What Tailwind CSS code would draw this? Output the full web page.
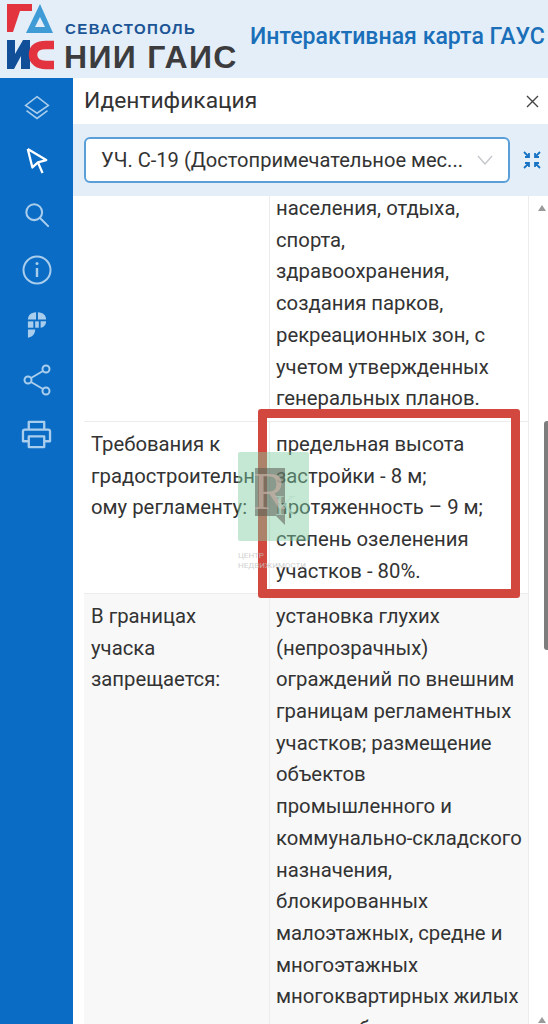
<!DOCTYPE html>
<html lang="en">

<head>
    <meta charset="UTF-8">
    <meta name="viewport" content="width=device-width, initial-scale=1.0">
    <script src="https://cdn.jsdelivr.net/npm/@tailwindcss/browser@4"></script>
    <title>Интерактивная карта ГАУС</title>
</head>

<body class="relative w-[548px] h-[1024px] overflow-hidden bg-white font-['Roboto',sans-serif]">
    <!-- header -->
    <header class="h-[78px] bg-[#e3eef8] flex items-center overflow-hidden">
        <svg class="ml-[6px] w-[50px] h-[68px] shrink-0 mt-[-6px]" viewBox="0 0 50 68">
            <path d="M1 2H26V9H14L7 30H1Z" fill="#e2333f" />
            <path d="M34 2L47 31H20ZM34 15L29 25H39Z" fill="#3f9bd6" fill-rule="evenodd" />
            <path d="M1 38H9V52L17 38H24V67H15V54L8 67H1Z" fill="#124f99" />
            <path d="M48 43H40C32 43 27 46 27 52.500S32 63 40 63H48" fill="none" stroke="#e2333f" stroke-width="8.500" />
        </svg>
        <div class="ml-[8px] w-[180px] shrink-0 mt-[18px]">
            <div class="text-[#1c5596] text-[15px] leading-[17px] font-bold tracking-[1.400px] font-['Liberation_Sans',sans-serif] ml-[1px]">СЕВАСТОПОЛЬ</div>
            <div class="text-[#3c3c3e] text-[32px] leading-[40px] font-bold tracking-[1.300px] font-['Liberation_Sans',sans-serif] whitespace-nowrap">НИИ ГАИС</div>
        </div>
        <div class="ml-[6px] text-[#1a6fb8] text-[23.100px] font-medium whitespace-nowrap -mt-[3px]">Интерактивная карта ГАУС</div>
    </header>

    <div class="flex h-[946px]">
        <!-- sidebar -->
        <nav class="w-[73px] shrink-0 bg-[#0a6cc4] flex flex-col pt-[2px] text-[#a9cdec]">
            <div class="h-[55px] flex items-center justify-center">
                <svg class="w-[28px] h-[28px]" viewBox="0 0 32 32" fill="none" stroke="currentColor" stroke-width="1.800">
                    <path d="M16 3L29 13L16 22L3 13Z" />
                    <path d="M4 19L16 28L28 19" />
                </svg>
            </div>
            <div class="h-[52px] flex items-center justify-center">
                <svg class="w-[24px] h-[30px]" viewBox="0 0 26 32" fill="none" stroke="white" stroke-width="2.500" stroke-linejoin="round">
                    <path d="M3 3L23 15L14 17.500L19 29M14 17.500L8 23L3 3" />
                </svg>
            </div>
            <div class="h-[55px] flex items-center justify-center">
                <svg class="w-[26px] h-[26px]" viewBox="0 0 28 28" fill="none" stroke="currentColor" stroke-width="2.200" stroke-linecap="round">
                    <circle cx="11" cy="11" r="8.500" />
                    <path d="M17.500 17.500L26 26" />
                </svg>
            </div>
            <div class="h-[55px] flex items-center justify-center">
                <svg class="w-[30px] h-[30px]" viewBox="0 0 30 30" fill="none" stroke="currentColor" stroke-width="2">
                    <circle cx="15" cy="15" r="13.500" />
                    <path d="M15 13V22" stroke-width="2.400" />
                    <circle cx="15" cy="8.500" r="1.500" fill="currentColor" stroke="none" />
                </svg>
            </div>
            <div class="h-[55px] flex items-center justify-center">
                <svg class="w-[20px] h-[28px]" viewBox="0 0 22 30" fill="currentColor">
                    <path d="M10 1V9H1C1 5 4 1 10 1Z" />
                    <path d="M12 1C18 1 21 5 21 9H12Z" />
                    <path d="M1 11H7V18H1Z" />
                    <path d="M9 11H13V18H9Z" />
                    <path d="M15 11H21C21 14 19 18 15 18Z" />
                    <path d="M1 20H9C9 25 6 28 1 29Z" />
                </svg>
            </div>
            <div class="h-[55px] flex items-center justify-center">
                <svg class="w-[28px] h-[32px]" viewBox="0 0 28 32" fill="none" stroke="currentColor" stroke-width="2">
                    <circle cx="23" cy="5" r="3.500" />
                    <circle cx="5" cy="16" r="3.500" />
                    <circle cx="23" cy="27" r="3.500" />
                    <path d="M8 14L20 7M8 18L20 25" />
                </svg>
            </div>
            <div class="h-[55px] flex items-center justify-center">
                <svg class="w-[31px] h-[29px]" viewBox="0 0 32 30" fill="none" stroke="currentColor" stroke-width="2.400" stroke-linejoin="round">
                    <path d="M8 10V2H24V10" />
                    <path d="M8 22H2V12C2 11 3 10 4 10H28C29 10 30 11 30 12V22H24" />
                    <path d="M8 17H24V28H8Z" />
                </svg>
            </div>
        </nav>

        <!-- panel -->
        <main class="flex-1 flex flex-col min-w-0">
            <div class="h-[46px] flex items-center justify-between pl-[11px] pr-[9px] shrink-0">
                <span class="text-[#333] text-[22.800px]">Идентификация</span>
                <svg class="w-[13px] h-[13px]" viewBox="0 0 13 13" stroke="#444" stroke-width="1.400">
                    <path d="M1 1L12 12M12 1L1 12" />
                </svg>
            </div>

            <div class="h-[72px] bg-[#e3eef8] flex items-center pl-[11px] shrink-0">
                <div class="w-[426px] h-[46px] bg-white border-2 border-[#5b9fd8] rounded-[6px] flex items-center pl-[15px] pr-[15px] shrink-0">
                    <span class="flex-1 text-[#333] text-[20.100px] whitespace-nowrap overflow-hidden">УЧ. С-19 (Достопримечательное мес...</span>
                    <svg class="w-[16px] h-[10px] shrink-0" viewBox="0 0 16 10" fill="none" stroke="#c4c8cc" stroke-width="1.400">
                        <path d="M1 1L8 9L15 1" />
                    </svg>
                </div>
                <svg class="w-[18px] h-[18px] ml-[13px] shrink-0" viewBox="0 0 18 18" fill="none" stroke="#1a74c4" stroke-width="1.800">
                    <path d="M1 1L6 6M6 2V6H2M17 1L12 6M12 2V6H16M1 17L6 12M6 16V12H2M17 17L12 12M12 16V12H16" />
                </svg>
            </div>

            <!-- table + scrollbar -->
            <div class="flex-1 flex min-h-0 overflow-hidden">
                <div class="w-[444px] shrink-0 ml-[11px] overflow-hidden text-[#333] text-[20.300px] leading-[31.700px]">
                    <div class="flex border-b border-[#ececec] -mt-[3px] pb-[6px]">
                        <div class="w-[186px] shrink-0 border-r border-[#ececec]"></div>
                        <div class="pl-[6px] whitespace-nowrap">населения, отдыха,<br>спорта,<br>здравоохранения,<br>создания парков,<br>рекреационных зон, с<br>учетом утвержденных<br>генеральных планов.</div>
                    </div>
                    <div class="flex border-b border-[#ececec] h-[172px] pt-[7px]">
                        <div class="w-[186px] shrink-0 border-r border-[#ececec] pl-[7px] -mt-[7px] pt-[7px] whitespace-nowrap">Требования к<br>градостроительн<br>ому регламенту:</div>
                        <div class="pl-[6px] whitespace-nowrap">предельная высота<br>застройки - 8 м;<br>протяженность – 9 м;<br>степень озеленения<br>участков - 80%.</div>
                    </div>
                    <div class="flex bg-[#f8f8f8] pt-[7px]">
                        <div class="w-[186px] shrink-0 border-r border-[#ececec] pl-[7px] -mt-[7px] pt-[7px]">В границах<br>учаска<br>запрещается:</div>
                        <div class="pl-[6px] whitespace-nowrap">установка глухих<br>(непрозрачных)<br>ограждений по внешним<br>границам регламентных<br>участков; размещение<br>объектов<br>промышленного и<br>коммунально-складского<br>назначения,<br>блокированных<br>малоэтажных, средне и<br>многоэтажных<br>многоквартирных жилых<br>домов, объектов</div>
                    </div>
                </div>
                <div class="flex-1 border-l border-[#ececec] flex flex-col items-end">
                    <svg class="w-[8px] h-[6px] mt-[9px] mr-[2px] shrink-0" viewBox="0 0 8 6" fill="#9a9a9a"><path d="M4 0L8 6H0Z" /></svg>
                    <div class="w-[4px] h-[229px] mt-[210px] bg-[#7d7d7d] rounded-l-[3px] shrink-0"></div>
                    <svg class="w-[8px] h-[6px] mt-[367px] mr-[2px] shrink-0" viewBox="0 0 8 6" fill="#9a9a9a"><path d="M4 0L8 6H0Z" /></svg>
                </div>
            </div>
        </main>
    </div>

    <!-- red annotation frame -->
    <div class="absolute left-[258px] top-[409px] w-[262px] h-[189px] border-[9px] border-[#d2483f] rounded-[3px]"></div>

    <!-- watermark on top of the photo -->
    <div class="absolute left-[238px] top-[452px] w-[71px] h-[89px] bg-[#7fcda0]/45 rounded-[2px]">
        <div class="absolute left-[17px] top-[16px] w-[30px] h-[57px] bg-[#5a5a50]/55 [clip-path:polygon(0_0,100%_0,100%_100%,70%_84%,0_84%)] flex items-start justify-center overflow-hidden">
            <span class="text-[#c9b4a6]/70 text-[52px] leading-[48px] font-['Liberation_Serif',serif]">R</span>
        </div>
        <span class="absolute left-[37px] top-[38px] text-[#b4dcc8]/70 text-[30px] leading-[30px] font-['Liberation_Serif',serif]">K</span>
    </div>
    <div class="absolute left-[238px] top-[551px] text-[#c4c4c4]/80 text-[8px] leading-[10px] whitespace-nowrap">ЦЕНТР<br>НЕДВИЖИМОСТИ</div>
</body>

</html>
